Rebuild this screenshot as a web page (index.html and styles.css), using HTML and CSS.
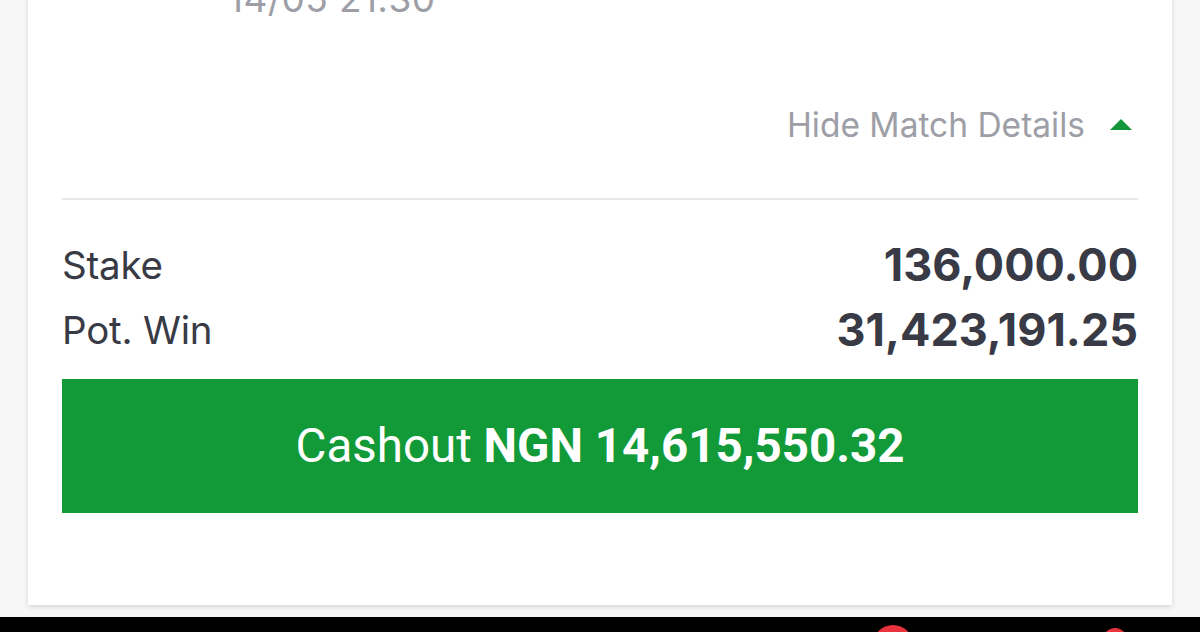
FILE: index.html
```html
<!DOCTYPE html>
<html>
<head>
<meta charset="utf-8">
<link rel="stylesheet" href="styles.css">
</head>
<body>
<div class="page">
  <div class="card">
    <div class="date-row"><span class="date">14/05 21:30</span></div>
    <div class="details">
      <div class="toggle-row">
        <span class="toggle-text">Hide Match Details</span>
        <svg class="caret" width="22" height="12" viewBox="0 0 22 12"><path d="M0 12 L11 1 L22 12 Z" fill="#13973a"/></svg>
      </div>
      <div class="divider"></div>
      <div class="sum-row"><span class="label">Stake</span><span class="value">136,000.00</span></div>
      <div class="sum-row"><span class="label">Pot. Win</span><span class="value">31,423,191.25</span></div>
      <button class="cashout">Cashout <b>NGN 14,615,550.32</b></button>
    </div>
  </div>
  <div class="bottom-bar">
    <span class="dot dot-a"></span>
    <span class="dot dot-b"></span>
  </div>
</div>
</body>
</html>
```
FILE: styles.css
```css
html, body {
  margin: 0;
  padding: 0;
  height: 632px;
  overflow: hidden;
  background: #f7f7f7;
}
.page {
  display: flex;
  flex-direction: column;
  margin-top: -40px;
  font-family: Inter, "Liberation Sans", sans-serif;
}
.card {
  margin: 0 28px;
  background: #fff;
  box-shadow: 0 2px 5px rgba(0,0,0,0.13);
  padding: 0 34px 92px;
}
.date-row {
  height: 101px;
  padding-top: 11px;
  line-height: 56px;
  padding-left: 166px;
}
.date {
  font-size: 37px;
  color: #9d9ea6;
  letter-spacing: 0.4px;
}
.details {
  display: flex;
  flex-direction: column;
}
.toggle-row {
  height: 106px;
  display: flex;
  align-items: center;
  justify-content: flex-end;
  gap: 25px;
  padding-right: 6px;
}
.toggle-text {
  font-size: 33.5px;
  color: #9d9ea6;
}
.caret {
  margin-top: -2px;
}
.divider {
  margin-top: 20px;
  height: 2px;
  background: #e8e8ec;
}
.sum-row {
  height: 65px;
  display: flex;
  align-items: center;
  justify-content: space-between;
  color: #383a45;
}
.divider + .sum-row {
  margin-top: 32px;
}
.label {
  font-size: 38.5px;
  letter-spacing: -0.2px;
}
.value {
  font-size: 45px;
  font-weight: 700;
}
.cashout {
  margin-top: 17px;
  height: 134px;
  border: none;
  background: #129a38;
  color: #fff;
  font-family: Roboto, "Liberation Sans", sans-serif;
  font-size: 47.5px;
  font-weight: 400;
  padding: 0;
}
.cashout b {
  font-weight: 700;
}
.bottom-bar {
  margin-top: 12px;
  height: 15px;
  background: #000;
  position: relative;
  overflow: hidden;
}
.dot {
  position: absolute;
  border-radius: 50%;
  background: #e8323c;
}
.dot-a {
  left: 873px;
  top: 8px;
  width: 40px;
  height: 40px;
}
.dot-b {
  left: 1103px;
  top: 11px;
  width: 24px;
  height: 24px;
}
```
